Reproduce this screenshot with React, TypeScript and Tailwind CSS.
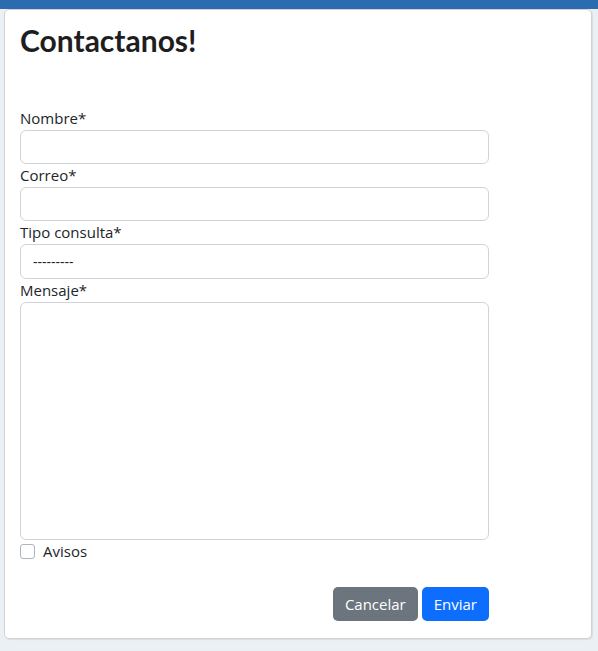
import React from 'react';

// campos del formulario de contacto
const campos = [
  { id: 'nombre', label: 'Nombre*' },
  { id: 'correo', label: 'Correo*' },
];

export default function App() {
  return (
    <div className="min-h-[651px] bg-[#ebf0f5] font-['Open_Sans',sans-serif] text-[#212529]">
      <div className="h-[9px] bg-[#2b6cb0]" />
      <div className="ml-[4px] mr-[6px] rounded-[5px] border border-[#d2d2d2] bg-white px-[15px] pt-[13px] pb-[17px] shadow-[1px_1px_1px_rgba(0,0,0,0.08)]">
        <h1 className="font-['Lato',sans-serif] text-[30px] font-bold leading-[34px] text-[#1e1e1e]">
          Contactanos!
        </h1>
        <form className="mt-[50px] w-[469px]">
          {campos.map((c) => (
            <div key={c.id}>
              <label htmlFor={c.id} className="block text-[15px] leading-[23px]">
                {c.label}
              </label>
              <input
                id={c.id}
                type="text"
                className="block h-[34px] w-full rounded-[6px] border border-[#ced4da] px-3"
              />
            </div>
          ))}
          <label htmlFor="tipo" className="block text-[15px] leading-[23px]">
            Tipo consulta*
          </label>
          <select
            id="tipo"
            className="block h-[35px] w-full appearance-none rounded-[6px] border border-[#ced4da] bg-white px-3 text-[14px]"
          >
            <option>---------</option>
          </select>
          <label htmlFor="mensaje" className="block text-[15px] leading-[23px]">
            Mensaje*
          </label>
          <textarea
            id="mensaje"
            className="block h-[238px] w-full resize-none rounded-[6px] border border-[#ced4da] px-3"
          />
          <div className="mt-[3px] flex items-center gap-2">
            <span className="h-[15px] w-[15px] rounded-[3px] border border-[#adb5bd] bg-white" />
            <span className="text-[15px] leading-[17px]">Avisos</span>
          </div>
          <div className="mt-[27px] flex justify-end gap-1">
            <button
              type="button"
              className="h-[34px] rounded-[5px] bg-[#6c757d] px-3 text-[15px] text-white"
            >
              Cancelar
            </button>
            <button
              type="button"
              className="h-[34px] rounded-[5px] bg-[#0d6efd] px-3 text-[15px] text-white"
            >
              Enviar
            </button>
          </div>
        </form>
      </div>
    </div>
  );
}
